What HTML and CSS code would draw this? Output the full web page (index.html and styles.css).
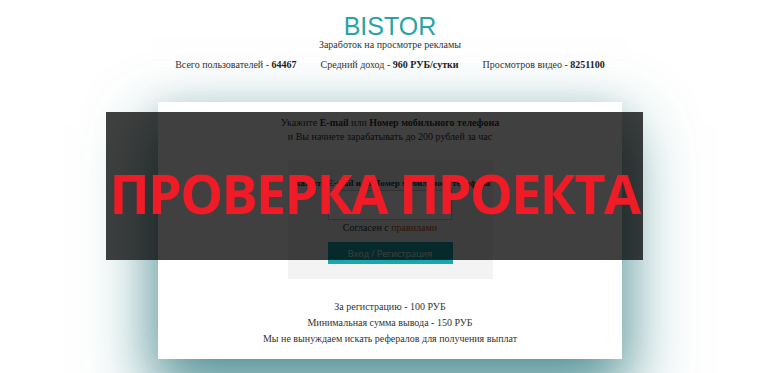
FILE: index.html
```html
<!DOCTYPE html>
<html lang="ru">
<head>
<meta charset="utf-8">
<title>BISTOR</title>
<link rel="stylesheet" href="styles.css">
</head>
<body>
<div class="page">
  <div class="content">
    <header class="header">
      <div class="logo">BISTOR</div>
      <div class="tagline">Заработок на просмотре рекламы</div>
      <div class="stats">
        <span>Всего пользователей - <b>64467</b></span>
        <span>Средний доход - <b>960 РУБ/сутки</b></span>
        <span>Просмотров видео - <b>8251100</b></span>
      </div>
    </header>
    <main class="card">
      <p class="intro">Укажите <b>E-mail</b> или <b>Номер мобильного телефона</b><br>и Вы начнете зарабатывать до 200 рублей за час</p>
      <form class="panel">
        <label class="label">Укажите E-mail или Номер мобильного телефона</label>
        <input class="field" type="text">
        <div class="agree">Согласен с <a href="#">правилами</a></div>
        <button class="btn" type="button">Вход / Регистрация</button>
      </form>
      <p class="info">За регистрацию - 100 РУБ<br>Минимальная сумма вывода - 150 РУБ<br>Мы не вынуждаем искать рефералов для получения выплат</p>
    </main>
  </div>
  <div class="banner"><span>ПРОВЕРКА ПРОЕКТА</span></div>
</div>
</body>
</html>
```
FILE: styles.css
```css
html, body {
  margin: 0;
  padding: 0;
  background: #fff;
}
.page {
  position: relative;
  width: 768px;
  height: 373px;
  overflow: hidden;
  font-family: "Liberation Serif", "Times New Roman", serif;
  color: #333;
}
.content {
  padding-left: 12px;
}
.header {
  display: flex;
  flex-direction: column;
  align-items: center;
  padding-top: 14px;
}
.logo {
  font-family: "Liberation Sans", Arial, sans-serif;
  font-size: 25px;
  line-height: 24px;
  color: #2aa3a8;
}
.tagline {
  font-size: 10px;
  line-height: 13px;
}
.stats {
  display: flex;
  gap: 24px;
  margin-top: 7px;
  font-size: 10px;
  line-height: 14px;
  color: #333;
}
.stats b { color: #222; }
.card {
  width: 464px;
  margin: 30px auto 0;
  background: #fff;
  box-shadow: 0 30px 60px 6px rgba(25, 110, 115, 0.72), 0 0 30px rgba(40, 90, 95, 0.08);
  padding: 14px 0 12px;
  text-align: center;
  display: flex;
  flex-direction: column;
  align-items: center;
}
.intro {
  margin: 0;
  font-size: 10px;
  line-height: 14px;
}
.panel {
  margin-top: 16px;
  width: 205px;
  background: #f3f3f3;
  padding: 16px 0 15px;
  display: flex;
  flex-direction: column;
  align-items: center;
}
.label {
  font-size: 9px;
  line-height: 14px;
  font-weight: bold;
  white-space: nowrap;
}
.field {
  box-sizing: border-box;
  width: 124px;
  height: 30px;
  margin: 0;
  border: 1px solid #c8c8c8;
  background: #fff;
}
.agree {
  font-size: 10px;
  line-height: 16px;
}
.agree a {
  color: #c2541a;
  text-decoration: none;
}
.btn {
  margin-top: 6px;
  width: 125px;
  height: 22px;
  border: 0;
  padding: 0;
  background: #19a8b0;
  color: #e6f4f4;
  font-family: "Open Sans", sans-serif;
  font-size: 9px;
}
.info {
  margin: 20px 0 0;
  font-size: 10px;
  line-height: 16px;
}
.banner {
  position: absolute;
  left: 106px;
  top: 112px;
  width: 537px;
  height: 148px;
  background: rgba(0, 0, 0, 0.75);
  display: flex;
  justify-content: center;
  align-items: center;
}
.banner span {
  font-family: "Open Sans", sans-serif;
  font-weight: bold;
  font-size: 54px;
  letter-spacing: -1.7px;
  line-height: 1;
  color: #ef1c27;
  margin-top: 13px;
  white-space: nowrap;
}
```
